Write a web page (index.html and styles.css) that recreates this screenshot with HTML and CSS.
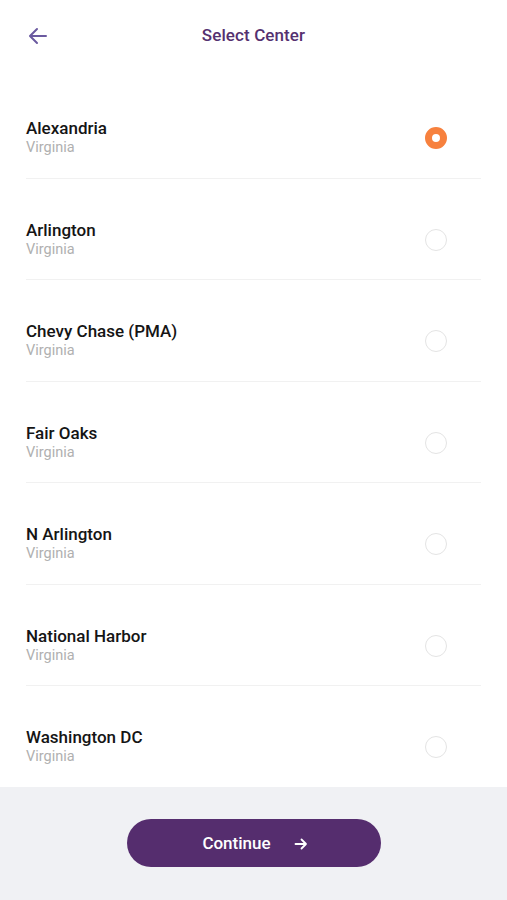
FILE: index.html
```html
<!DOCTYPE html>
<html>
<head>
<meta charset="utf-8">
<link rel="stylesheet" href="styles.css">
</head>
<body>
<div class="page">
  <header class="header">
    <button class="back" aria-label="Back">
      <svg width="24" height="24" viewBox="0 0 24 24"><path d="M20 12H4.5M11 5l-7 7 7 7" fill="none" stroke="#6b5aa0" stroke-width="2" stroke-linecap="round" stroke-linejoin="round"/></svg>
    </button>
    <h1 class="title">Select Center</h1>
  </header>
  <main class="list">
    <div class="item"><div class="info"><div class="name">Alexandria</div><div class="state">Virginia</div></div><span class="radio selected"></span></div>
    <div class="item"><div class="info"><div class="name">Arlington</div><div class="state">Virginia</div></div><span class="radio"></span></div>
    <div class="item"><div class="info"><div class="name">Chevy Chase (PMA)</div><div class="state">Virginia</div></div><span class="radio"></span></div>
    <div class="item"><div class="info"><div class="name">Fair Oaks</div><div class="state">Virginia</div></div><span class="radio"></span></div>
    <div class="item"><div class="info"><div class="name">N Arlington</div><div class="state">Virginia</div></div><span class="radio"></span></div>
    <div class="item"><div class="info"><div class="name">National Harbor</div><div class="state">Virginia</div></div><span class="radio"></span></div>
    <div class="item"><div class="info"><div class="name">Washington DC</div><div class="state">Virginia</div></div><span class="radio"></span></div>
  </main>
  <footer class="footer">
    <button class="continue">Continue
      <svg width="16" height="16" viewBox="0 0 16 16"><path d="M2.5 8h10.5M8.5 3.5L13 8l-4.5 4.5" fill="none" stroke="#fff" stroke-width="1.8" stroke-linecap="round" stroke-linejoin="round"/></svg>
    </button>
  </footer>
</div>
</body>
</html>
```
FILE: styles.css
```css
* { box-sizing: border-box; }
html, body { margin: 0; padding: 0; }
body { font-family: Roboto, "Noto Sans", sans-serif; background: #fff; }
.page { height: 900px; display: flex; flex-direction: column; overflow: hidden; }
.header { height: 70px; display: flex; align-items: center; justify-content: center; position: relative; flex: none; }
.back { position: absolute; left: 26px; top: 24px; background: none; border: 0; padding: 0; width: 24px; height: 24px; display: flex; }
.title { margin: 0; font-size: 17px; font-weight: 500; color: #553170; letter-spacing: 0.1px; }
.list { flex: 1; overflow: hidden; padding: 7px 26px 0 26px; }
.item { display: flex; align-items: center; justify-content: space-between; padding: 41px 34px 19.5px 0; border-bottom: 1px solid #f1f1f1; }
.name { font-size: 17px; font-weight: 500; color: #151515; line-height: 20px; }
.state { font-size: 14.5px; color: #b0b0b0; line-height: 20px; }
.radio { width: 22px; height: 22px; border-radius: 50%; border: 1.5px solid #e4e4e4; flex: none; }
.radio.selected { border: 7.5px solid #f7813e; background: #fff; }
.footer { height: 113px; flex: none; background: #f0f1f4; display: flex; justify-content: center; padding-top: 32px; }
.continue { width: 254px; height: 48px; border: 0; border-radius: 24px; background: #552d6e; color: #fff; font-family: Roboto, sans-serif; font-size: 17px; font-weight: 500; display: flex; align-items: center; justify-content: center; gap: 22px; padding: 0 0 0 4px; }
.continue svg { margin-top: 1px; }
```
